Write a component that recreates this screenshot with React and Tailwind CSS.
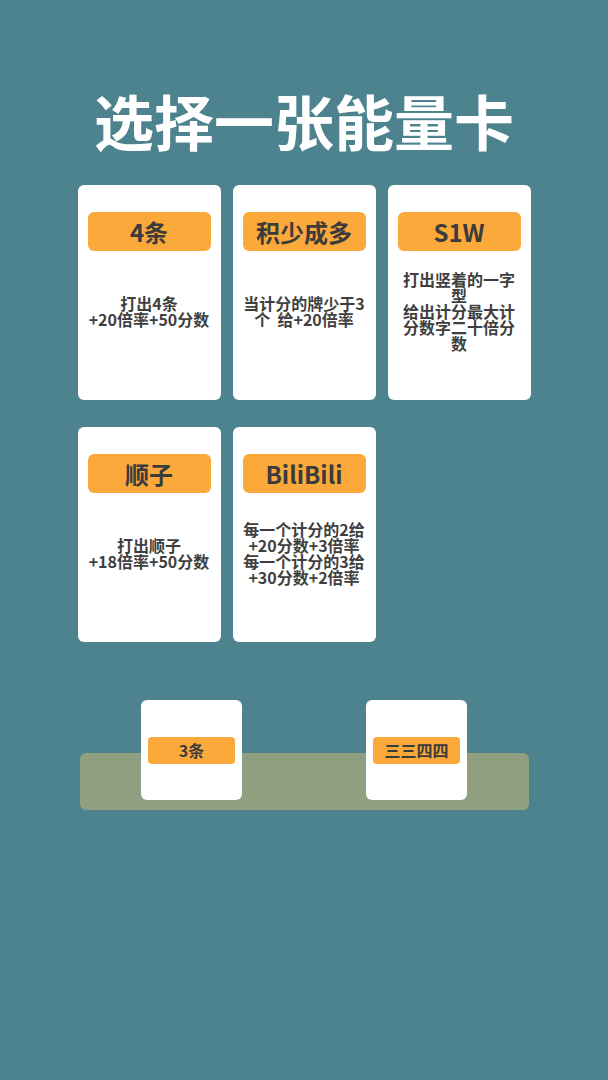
const font = { fontFamily: '"Noto Sans CJK SC", "Noto Sans", sans-serif' };

const cards = [
  { title: "4条", lines: ["打出4条", "+20倍率+50分数"] },
  { title: "积少成多", lines: ["当计分的牌少于3", "个  给+20倍率"] },
  { title: "S1W", lines: ["打出竖着的一字", "型", "给出计分最大计", "分数字二十倍分", "数"] },
  { title: "顺子", lines: ["打出顺子", "+18倍率+50分数"] },
  { title: "BiliBili", lines: ["每一个计分的2给", "+20分数+3倍率", "每一个计分的3给", "+30分数+2倍率"] },
];

const hand = ["3条", "三三四四"];

function EnergyCard({ title, lines }) {
  return (
    <div className="flex h-[215px] flex-col rounded-[6px] bg-white px-[10px] pt-[27px] pb-[30px]">
      <div className="flex h-[39px] items-center justify-center rounded-[6px] bg-[#fba93b] text-[24px] font-bold text-[#3b3b3b]">
        {title}
      </div>
      <div className="flex flex-1 flex-col items-center justify-center text-center text-[16px] leading-[16px] font-bold text-[#3f3f3f]">
        {lines.map((l, i) => (
          <div key={i} className="whitespace-pre">
            {l}
          </div>
        ))}
      </div>
    </div>
  );
}

export default function App() {
  return (
    <div className="min-h-[1080px] w-full bg-[#4d838e]" style={font}>
      <h1 className="pt-[88px] text-center text-[60px] leading-[64px] font-bold text-white">
        选择一张能量卡
      </h1>

      <div className="mx-auto mt-[33px] grid w-[453px] grid-cols-3 gap-x-[12px] gap-y-[27px]">
        {cards.map((c) => (
          <EnergyCard key={c.title} {...c} />
        ))}
      </div>

      <div className="relative mx-auto mt-[58px] h-[110px] w-[449px]">
        {/* table strip behind the hand */}
        <div className="absolute inset-x-0 bottom-0 h-[57px] rounded-[6px] bg-[#8f9f80]" />
        <div className="relative flex justify-center gap-[124px]">
          {hand.map((h) => (
            <div
              key={h}
              className="flex h-[100px] w-[101px] items-center justify-center rounded-[6px] bg-white"
            >
              <div className="flex h-[27px] w-[87px] items-center justify-center rounded-[4px] bg-[#fba93b] text-[16px] font-bold text-[#3b3b3b]">
                {h}
              </div>
            </div>
          ))}
        </div>
      </div>
    </div>
  );
}
